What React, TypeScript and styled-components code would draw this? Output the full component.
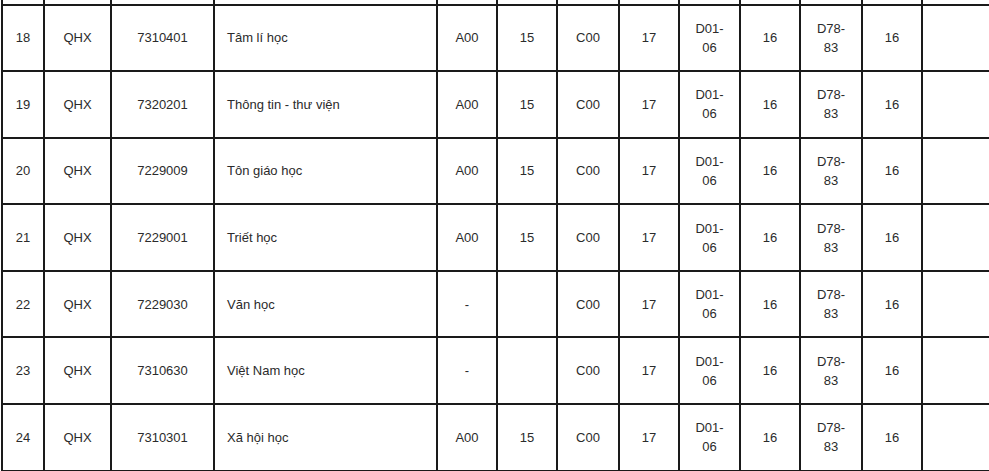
import styled, { createGlobalStyle } from 'styled-components';

interface TRow {
  stt: number;
  code: string;
  major: string;
  name: string;
  a00: string;
  a00Score: string;
  c00: string;
  c00Score: string;
  d01: string;
  d01Score: string;
  d78: string;
  d78Score: string;
}

const rows: TRow[] = [
  { stt: 18, code: '7310401', major: 'QHX', name: 'Tâm lí học', a00: 'A00', a00Score: '15', c00: 'C00', c00Score: '17', d01: 'D01-06', d01Score: '16', d78: 'D78-83', d78Score: '16' },
  { stt: 19, code: '7320201', major: 'QHX', name: 'Thông tin - thư viện', a00: 'A00', a00Score: '15', c00: 'C00', c00Score: '17', d01: 'D01-06', d01Score: '16', d78: 'D78-83', d78Score: '16' },
  { stt: 20, code: '7229009', major: 'QHX', name: 'Tôn giáo học', a00: 'A00', a00Score: '15', c00: 'C00', c00Score: '17', d01: 'D01-06', d01Score: '16', d78: 'D78-83', d78Score: '16' },
  { stt: 21, code: '7229001', major: 'QHX', name: 'Triết học', a00: 'A00', a00Score: '15', c00: 'C00', c00Score: '17', d01: 'D01-06', d01Score: '16', d78: 'D78-83', d78Score: '16' },
  { stt: 22, code: '7229030', major: 'QHX', name: 'Văn học', a00: '-', a00Score: '', c00: 'C00', c00Score: '17', d01: 'D01-06', d01Score: '16', d78: 'D78-83', d78Score: '16' },
  { stt: 23, code: '7310630', major: 'QHX', name: 'Việt Nam học', a00: '-', a00Score: '', c00: 'C00', c00Score: '17', d01: 'D01-06', d01Score: '16', d78: 'D78-83', d78Score: '16' },
  { stt: 24, code: '7310301', major: 'QHX', name: 'Xã hội học', a00: 'A00', a00Score: '15', c00: 'C00', c00Score: '17', d01: 'D01-06', d01Score: '16', d78: 'D78-83', d78Score: '16' },
];

const colWidths = [42, 67, 103, 223, 60, 60, 62, 60, 61, 60, 62, 60, 80];

const GlobalStyle = createGlobalStyle`
  html, body {
    margin: 0;
    padding: 0;
    background: #fff;
    overflow: hidden;
  }
  body {
    font-family: "Liberation Sans", Arial, sans-serif;
  }
`;

const App = () => {
  return (
    <>
      <GlobalStyle />
      <S.Viewport>
        <S.Table>
          <colgroup>
            {colWidths.map((w, i) => (
              <col key={i} style={{ width: w }} />
            ))}
          </colgroup>
          <tbody>
            {/* tail of the row above, cut off by the screenshot */}
            <S.Row>
              {colWidths.map((_, i) => (
                <S.Cell key={i} />
              ))}
            </S.Row>
            {rows.map((r) => (
              <S.Row key={r.stt}>
                <S.Cell>{r.stt}</S.Cell>
                <S.Cell>{r.major}</S.Cell>
                <S.Cell>{r.code}</S.Cell>
                <S.Cell $left>{r.name}</S.Cell>
                <S.Cell>{r.a00}</S.Cell>
                <S.Cell>{r.a00Score}</S.Cell>
                <S.Cell>{r.c00}</S.Cell>
                <S.Cell>{r.c00Score}</S.Cell>
                <S.Cell>{r.d01}</S.Cell>
                <S.Cell>{r.d01Score}</S.Cell>
                <S.Cell>{r.d78}</S.Cell>
                <S.Cell>{r.d78Score}</S.Cell>
                <S.Cell />
              </S.Row>
            ))}
          </tbody>
        </S.Table>
      </S.Viewport>
    </>
  );
};

export default App;

const S = {
  Viewport: styled.div`
    width: 989px;
    height: 471px;
    overflow: hidden;
  `,

  Table: styled.table`
    border-collapse: collapse;
    table-layout: fixed;
    width: 1000px;
    margin-top: -63px;
    margin-left: 1px;
    color: #2b2b2b;
    font-size: 13px;
    line-height: 19px;
  `,

  Row: styled.tr`
    height: 66.57px;
  `,

  Cell: styled.td<{ $left?: boolean }>`
    border: 2px solid #1a1a1a;
    padding: 0 12px;
    text-align: ${(p) => (p.$left ? 'left' : 'center')};
    vertical-align: middle;
  `,
};
